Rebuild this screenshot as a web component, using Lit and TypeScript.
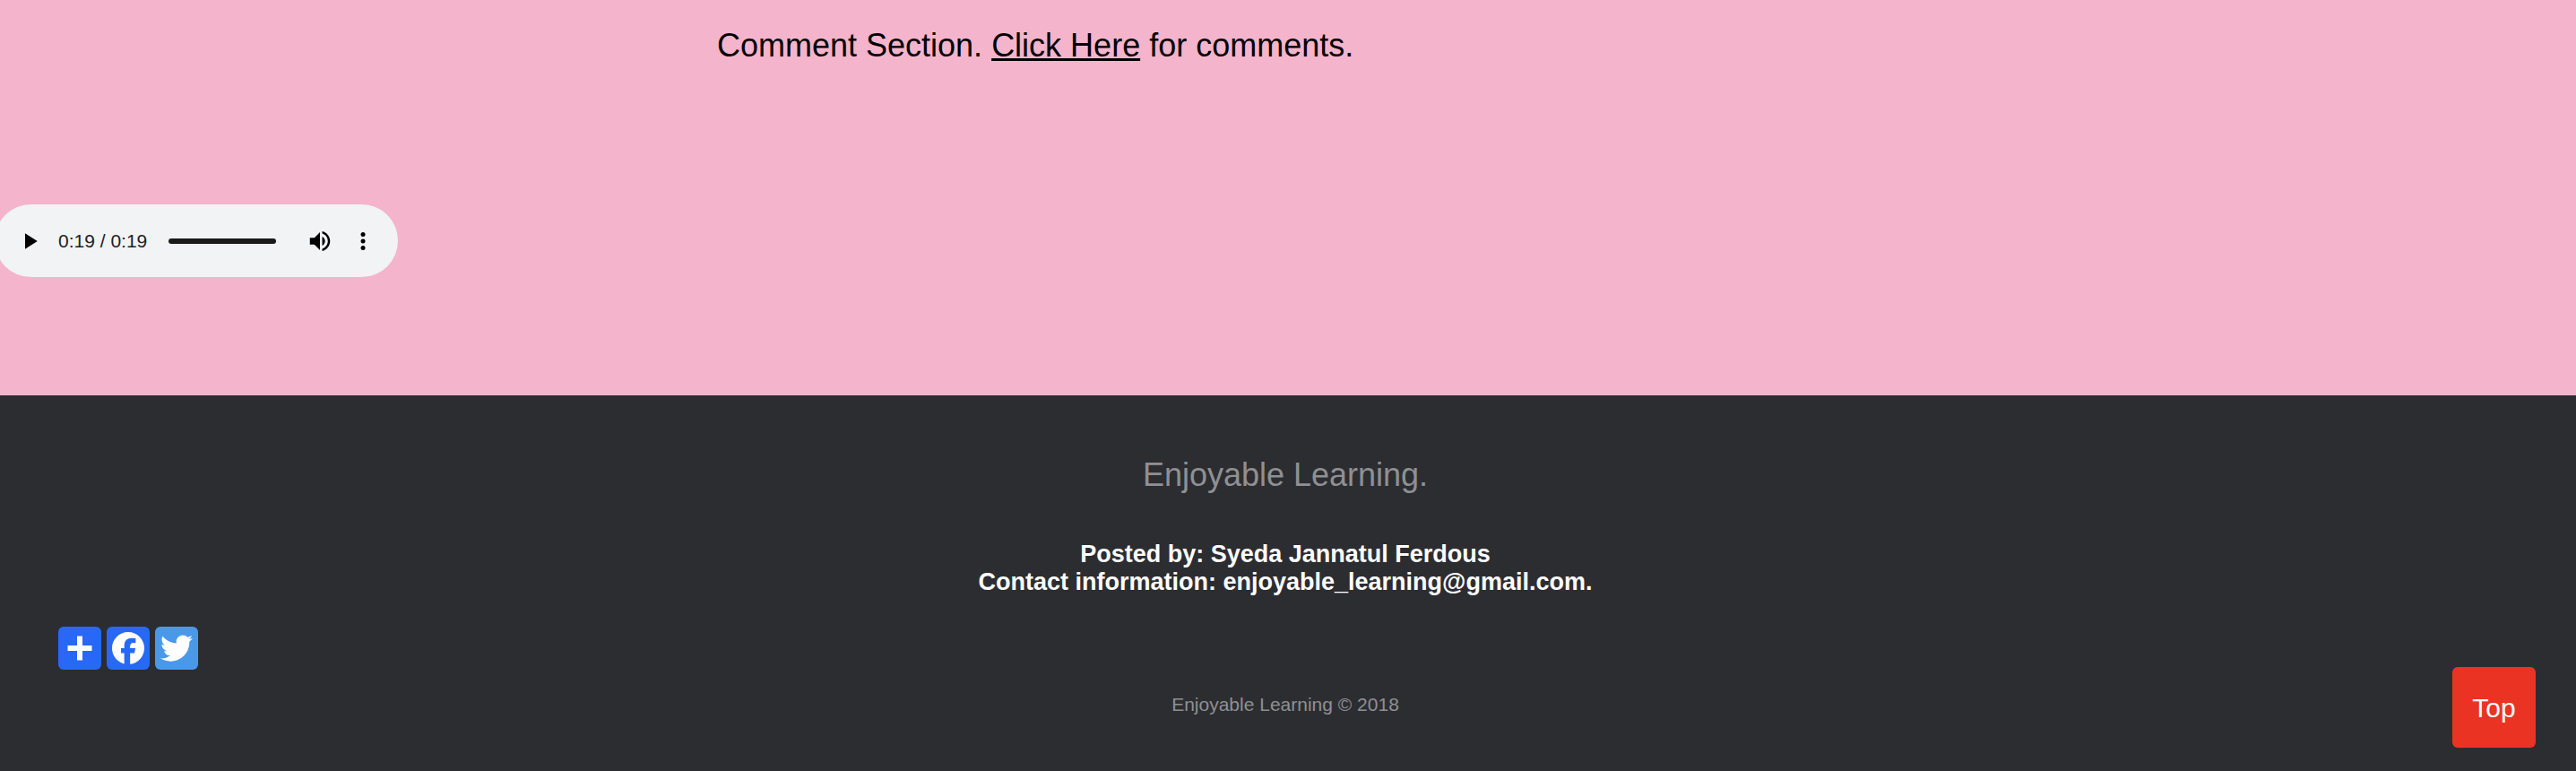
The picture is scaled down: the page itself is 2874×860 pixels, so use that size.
import { LitElement, html, css } from "lit";
import { customElement, property } from "lit/decorators.js";

@customElement("audio-player")
class AudioPlayer extends LitElement {
  @property() elapsed = "0:19";
  @property() duration = "0:19";

  static styles = css`
    :host {
      display: flex;
      align-items: center;
      box-sizing: border-box;
      width: 450px;
      height: 81px;
      padding: 0 24px;
      border-radius: 41px;
      background: #f1f3f4;
      color: #222;
      font-size: 21px;
      line-height: 24px;
    }
    button {
      display: block;
      flex: none;
      width: 30px;
      height: 30px;
      padding: 0;
      border: 0;
      background: none;
      color: #000;
      cursor: pointer;
    }
    svg {
      display: block;
      width: 30px;
      height: 30px;
      fill: currentColor;
    }
    .time {
      margin: 0 24px 0 17px;
      white-space: nowrap;
    }
    .seek {
      appearance: none;
      flex: 1;
      min-width: 0;
      height: 6px;
      margin: 0 34px 0 0;
      border-radius: 3px;
      background: #1a1a1a;
    }
    .seek::-webkit-slider-thumb {
      appearance: none;
      width: 6px;
      height: 6px;
      background: transparent;
    }
    .more {
      margin-left: 18px;
    }
  `;

  render() {
    return html`
      <button aria-label="Play">
        <svg viewBox="0 0 24 24"><path d="M8 5v14l11-7z" /></svg>
      </button>
      <span class="time">${this.elapsed} / ${this.duration}</span>
      <input class="seek" type="range" min="0" max="19" .value=${"19"} aria-label="Seek" />
      <button aria-label="Mute">
        <svg viewBox="0 0 24 24">
          <path
            d="M3 9v6h4l5 5V4L7 9H3zm13.5 3c0-1.77-1.02-3.29-2.5-4.03v8.05c1.48-.73 2.5-2.25 2.5-4.02zM14 3.23v2.06c2.89.86 5 3.54 5 6.71s-2.11 5.85-5 6.71v2.06c4.01-.91 7-4.49 7-8.77s-2.99-7.86-7-8.77z"
          />
        </svg>
      </button>
      <button class="more" aria-label="More options">
        <svg viewBox="0 0 24 24">
          <circle cx="12" cy="6" r="2" />
          <circle cx="12" cy="12" r="2" />
          <circle cx="12" cy="18" r="2" />
        </svg>
      </button>
    `;
  }
}

@customElement("share-links")
class ShareLinks extends LitElement {
  static styles = css`
    :host {
      display: flex;
      gap: 6px;
    }
    a {
      display: block;
      width: 48px;
      height: 48px;
      border-radius: 6px;
      background: #2769f6;
    }
    .twitter {
      background: #4a99e9;
    }
    svg {
      display: block;
      width: 48px;
      height: 48px;
      fill: #fff;
    }
  `;

  render() {
    return html`
      <a href="#share" aria-label="Share">
        <svg viewBox="0 0 32 32"><path d="M14 7h4v18h-4z" /><path d="M7 14h18v4H7z" /></svg>
      </a>
      <a href="#facebook" aria-label="Facebook">
        <svg viewBox="0 0 32 32">
          <path
            d="M28 16c0-6.627-5.373-12-12-12S4 9.373 4 16c0 5.628 3.875 10.35 9.101 11.647v-7.98h-2.474V16H13.1v-1.58c0-4.085 1.849-5.978 5.859-5.978.76 0 2.072.15 2.608.298v3.325c-.283-.03-.775-.045-1.386-.045-1.967 0-2.728.745-2.728 2.683V16h3.92l-.673 3.667h-3.247v8.245C23.395 27.195 28 22.135 28 16"
          />
        </svg>
      </a>
      <a class="twitter" href="#twitter" aria-label="Twitter">
        <svg viewBox="0 0 32 32">
          <path
            d="M28 8.557a9.913 9.913 0 0 1-2.828.775 4.93 4.93 0 0 0 2.166-2.725 9.738 9.738 0 0 1-3.13 1.194 4.92 4.92 0 0 0-3.593-1.55 4.924 4.924 0 0 0-4.794 6.049c-4.09-.21-7.72-2.17-10.15-5.15a4.942 4.942 0 0 0-.665 2.477c0 1.71.87 3.214 2.19 4.1a4.968 4.968 0 0 1-2.23-.616v.06c0 2.39 1.7 4.38 3.952 4.83-.414.115-.85.174-1.297.174-.318 0-.626-.03-.928-.086a4.935 4.935 0 0 0 4.6 3.42 9.893 9.893 0 0 1-6.114 2.107c-.398 0-.79-.023-1.175-.068a13.953 13.953 0 0 0 7.55 2.213c9.056 0 14.01-7.507 14.01-14.013 0-.213-.005-.426-.015-.637.96-.695 1.795-1.56 2.455-2.55z"
          />
        </svg>
      </a>
    `;
  }
}

@customElement("app-root")
class AppRoot extends LitElement {
  static styles = css`
    :host {
      display: flex;
      flex-direction: column;
      min-height: 100vh;
      overflow-x: hidden;
      background: #f4b4cc;
      color: #000;
      font-family: "Liberation Sans", Helvetica, Arial, sans-serif;
    }
    p {
      margin: 0;
    }
    main {
      padding: 30px 0 132px;
    }
    .comments {
      padding-left: 800px;
      font-size: 36px;
      line-height: 42px;
    }
    .comments a {
      color: inherit;
      text-decoration: underline;
      text-decoration-thickness: 3px;
      text-underline-offset: 2px;
      text-decoration-skip-ink: none;
    }
    audio-player {
      margin: 156px 0 0 -6px;
    }
    footer {
      flex: 1;
      padding: 68px 6px 62px 0;
      background: #2c2d31;
      color: #8f9093;
      text-align: center;
    }
    .title {
      font-size: 36px;
      line-height: 42px;
    }
    .contact {
      margin-top: 52px;
      color: #fff;
      font-size: 27px;
      font-weight: bold;
      line-height: 31px;
    }
    share-links {
      margin: 34px 0 27px 65px;
    }
    .copyright {
      font-size: 21px;
      line-height: 24px;
    }
    .top {
      position: fixed;
      right: 45px;
      bottom: 26px;
      width: 93px;
      height: 90px;
      padding: 2px 0 0;
      border: 0;
      border-radius: 6px;
      background: #eb3324;
      color: #fff;
      font-family: inherit;
      font-size: 30px;
      cursor: pointer;
    }
  `;

  private toTop() {
    window.scrollTo({ top: 0, behavior: "smooth" });
  }

  render() {
    return html`
      <main>
        <p class="comments">Comment Section. <a href="#comments">Click Here</a> for comments.</p>
        <audio-player></audio-player>
      </main>
      <footer>
        <p class="title">Enjoyable Learning.</p>
        <p class="contact">
          Posted by: Syeda Jannatul Ferdous<br />Contact information: enjoyable_learning@gmail.com.
        </p>
        <share-links></share-links>
        <p class="copyright">Enjoyable Learning © 2018</p>
      </footer>
      <button class="top" @click=${this.toTop}>Top</button>
    `;
  }
}
